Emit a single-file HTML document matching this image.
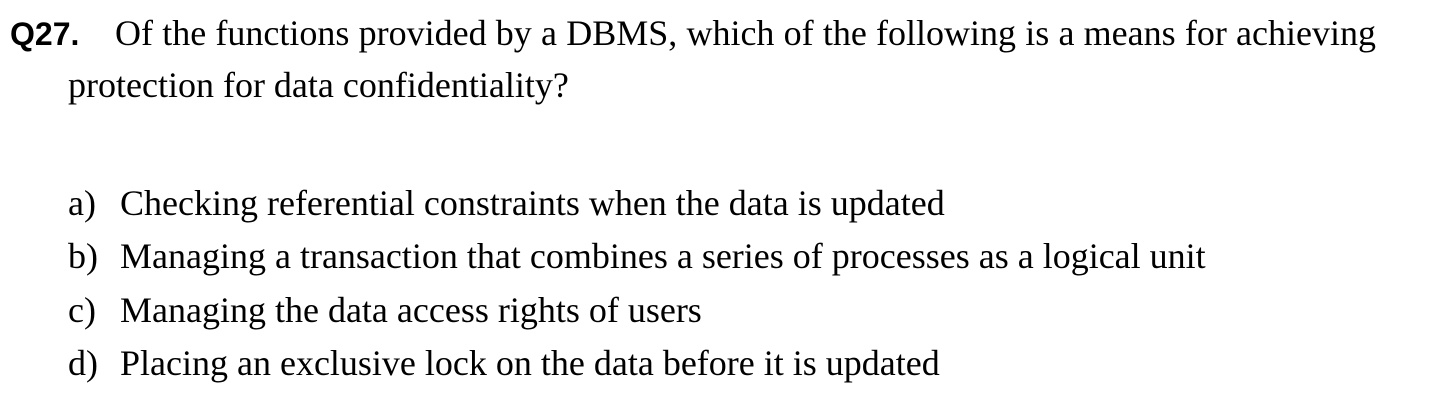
<!DOCTYPE html>
<html><head><meta charset="utf-8"><style>
html,body{margin:0;padding:0;background:#fff;width:1450px;height:413px;overflow:hidden;position:relative}
.s{position:absolute;font-family:"Liberation Serif",serif;font-size:36px;line-height:36px;color:#000;white-space:nowrap}
.q{position:absolute;font-family:"Liberation Sans",sans-serif;font-weight:bold;font-size:32px;line-height:32px;left:10px;top:18px}
.j{text-align:justify;text-align-last:justify;white-space:normal}
</style></head><body>
<div class="q">Q27.</div>
<div class="s j" style="left:115px;top:15px;width:1261px">Of the functions provided by a DBMS, which of the following is a means for achieving</div>
<div class="s" style="left:68px;top:67px">protection for data confidentiality?</div>
<div class="s" style="left:68px;top:185px">a)</div><div class="s" style="left:120px;top:185px">Checking referential constraints when the data is updated</div>
<div class="s" style="left:68px;top:238px">b)</div><div class="s" style="left:120px;top:238px">Managing a transaction that combines a series of processes as a logical unit</div>
<div class="s" style="left:68px;top:292px">c)</div><div class="s" style="left:120px;top:292px">Managing the data access rights of users</div>
<div class="s" style="left:68px;top:345px">d)</div><div class="s" style="left:120px;top:345px">Placing an exclusive lock on the data before it is updated</div>
</body></html>
